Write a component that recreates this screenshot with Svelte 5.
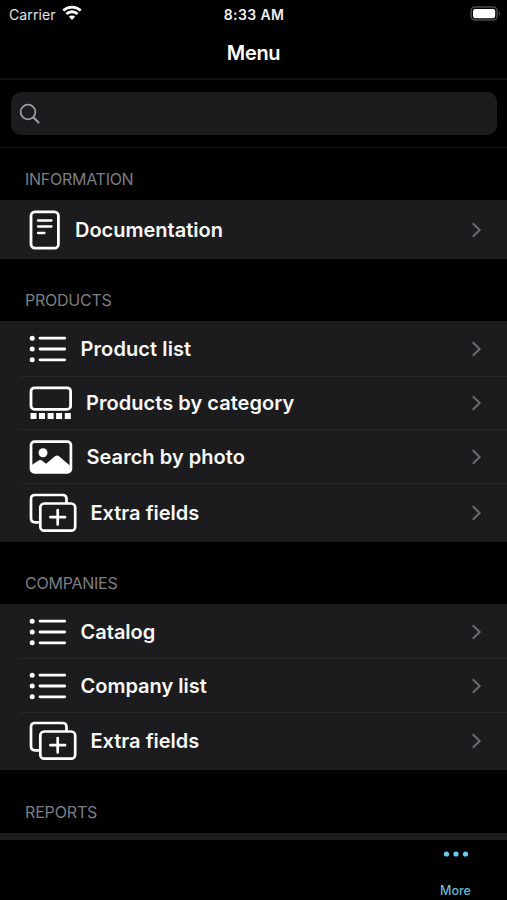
<script>
  const sections = [
    { title: 'INFORMATION', top: 52, ls: -0.27, rows: [{ icon: 'doc', label: 'Documentation', h: 59, w: 46, ls: 0 }] },
    {
      title: 'PRODUCTS', top: 62, ls: -0.25,
      rows: [
        { icon: 'list', label: 'Product list', h: 55, w: 51.5, ls: 0.1, pad: 1 },
        { icon: 'gallery', label: 'Products by category', h: 53, w: 57, ls: 0.04, pad: 1 },
        { icon: 'photo', label: 'Search by photo', h: 54, w: 57.5, ls: 0.04, pad: 2 },
        { icon: 'extra', label: 'Extra fields', h: 59, w: 61.5, ls: 0, pad: 0 }
      ]
    },
    {
      title: 'COMPANIES', top: 62, ls: -0.25,
      rows: [
        { icon: 'list', label: 'Catalog', h: 54, w: 51.5, ls: 0, pad: 2 },
        { icon: 'list', label: 'Company list', h: 54, w: 51.5, ls: 0, pad: 2 },
        { icon: 'extra', label: 'Extra fields', h: 58, w: 61.5, ls: 0, pad: 0 }
      ]
    },
    { title: 'REPORTS', top: 63, ls: -0.15, rows: [] }
  ];
</script>

<div class="screen">
  <div class="status">
    <div class="carrier">
      <span>Carrier</span>
      <svg width="20" height="16" viewBox="0 0 20 16" fill="none" stroke="#fff" stroke-width="2.8">
        <path d="M1.300 5.600C6.200.9 13.800.9 18.700 5.600" />
        <path d="M4.400 9C7.500 6 12.500 6 15.600 9" />
        <path d="M6.900 11.700C8.700 10 11.300 10 13.100 11.700L10 14.900Z" fill="#fff" stroke="none" />
      </svg>
    </div>
    <span class="time">8:33 AM</span>
    <svg class="battery" width="31" height="16" viewBox="0 0 31 16">
      <rect x="1.100" y="1.100" width="26" height="13" rx="4" fill="none" stroke="#4c4c4c" stroke-width="1.500" />
      <rect x="3" y="3" width="22.200" height="9.200" rx="2.200" fill="#fff" />
      <path d="M28.900 5.400Q31 7.600 28.900 9.800Z" fill="#555" />
    </svg>
  </div>
  <div class="title">Menu</div>
  <div class="searchwrap">
    <div class="search">
      <svg width="22" height="22" viewBox="0 0 22 22" fill="none" stroke="#98989e" stroke-width="1.800" stroke-linecap="round">
        <circle cx="9" cy="9" r="7.400" />
        <path d="M14.400 14.400L19.500 19.500" stroke-width="2.200" />
      </svg>
    </div>
  </div>

  <div class="list">
    {#each sections as s}
      <div class="header" style="height:{s.top}px;letter-spacing:{s.ls}px">{s.title}</div>
      {#each s.rows as r, i}
        <div class="row" class:first={i === 0} style="height:{r.h}px;padding-top:{r.pad ?? 0}px">
          <div class="icon" style="width:{r.w}px">
            {#if r.icon === 'doc'}
              <svg width="32" height="40" viewBox="0 0 32 40" fill="none" stroke="#fff" stroke-linecap="round">
                <rect x="2" y="1.800" width="27.400" height="36.400" rx="4" stroke-width="2.800" />
                <path d="M9 10.500H22.500M9 16.500H22.500M9 23H15.500" stroke-width="2.300" />
              </svg>
            {:else if r.icon === 'list'}
              <svg width="38" height="28" viewBox="0 0 38 28" fill="none" stroke="#fff" stroke-linecap="round">
                <path d="M11 3.200H35.700M11 14H35.700M11 24.800H35.700" stroke-width="2.800" />
                <g fill="#fff" stroke="none">
                  <circle cx="3.200" cy="3.200" r="2.500" /><circle cx="3.200" cy="14" r="2.500" /><circle cx="3.200" cy="24.800" r="2.500" />
                </g>
              </svg>
            {:else if r.icon === 'gallery'}
              <svg width="44" height="34" viewBox="0 0 44 34" fill="none">
                <rect x="2" y="1.800" width="39.600" height="21.600" rx="3.500" stroke="#fff" stroke-width="2.800" />
                <path d="M1.500 27h6v6h-6zM10 27h6v6h-6zM18.600 27h6v6h-6zM27.100 27h6v6h-6zM35.800 27h6v6h-6z" fill="#fff" />
              </svg>
            {:else if r.icon === 'photo'}
              <svg width="44" height="34" viewBox="0 0 44 34">
                <rect x="2" y="1.600" width="39.900" height="30.800" rx="3.500" fill="none" stroke="#fff" stroke-width="2.700" />
                <circle cx="14" cy="12.800" r="4.500" fill="#fff" />
                <path d="M2 25.500L10 20.300Q11.500 19.400 13 20.600L17 23.800L26 16.300Q28 14.800 30 16.300L42 26.500V29Q42 32.500 38.500 32.500H5.500Q2 32.500 2 29Z" fill="#fff" />
              </svg>
            {:else}
              <svg width="48" height="40" viewBox="0 0 48 40" fill="none" stroke="#fff" stroke-width="2.700" stroke-linecap="round">
                <path d="M9.500 29.300H6Q2 29.300 2 25.300V6Q2 2 6 2H33.500Q37.500 2 37.500 6V9.500" />
                <rect x="11.300" y="10.500" width="34.900" height="27.200" rx="4" />
                <path d="M28.700 17V31.400M21.400 24.200H36" />
              </svg>
            {/if}
          </div>
          <span class="label" style="letter-spacing:{r.ls}px">{r.label}</span>
          <svg class="chev" width="12" height="18" viewBox="0 0 12 18" fill="none" stroke="#69696d" stroke-width="2.100">
            <path d="M1.800 2.200L8.600 9L1.800 15.800" />
          </svg>
        </div>
      {/each}
    {/each}
    <div class="peek"></div>
  </div>

  <div class="tabs">
    <div class="tab">
      <svg width="26" height="6" viewBox="0 0 26 6" fill="#65cdef">
        <circle cx="3.500" cy="3" r="2.600" /><circle cx="13" cy="3" r="2.600" /><circle cx="22.500" cy="3" r="2.600" />
      </svg>
      <span>More</span>
    </div>
  </div>
</div>

<style>
  :global(body) { background: #000; }
  .screen {
    width: 507px; height: 900px; background: #000; color: #fff; overflow: hidden;
    display: flex; flex-direction: column; font-family: Inter, 'Liberation Sans', sans-serif;
  }
  svg { display: block; flex: none; }
  .status {
    height: 28px; flex: none; display: grid; grid-template-columns: 1fr auto 1fr;
    align-items: center; padding: 0 6px 0 9px; box-sizing: border-box; font-size: 14px;
  }
  .carrier { display: flex; align-items: center; gap: 6px; color: #e4e4e4; letter-spacing: 0.12px; }
  .carrier svg { margin-top: -2px; }
  .time { font-weight: 600; color: #eee; letter-spacing: 0.4px; margin-right: 2px; }
  .battery { justify-self: end; margin-top: -1px; }
  .title {
    height: 50px; flex: none; line-height: 50px; text-align: center; font-size: 20px; font-weight: 600;
    letter-spacing: -0.35px; border-bottom: 2px solid #111112;
  }
  .searchwrap { height: 68px; flex: none; box-sizing: border-box; padding: 12px 10px 0 11px; border-bottom: 1px solid #151516; }
  .search { height: 43px; border-radius: 10px; background: #1c1c1e; display: flex; align-items: center; padding-left: 8px; }
  .list { flex: none; height: 693px; overflow: hidden; }
  .header {
    box-sizing: border-box; padding: 0 0 11px 25px; display: flex; align-items: flex-end;
    font-size: 16px; line-height: 20px; color: #7e7e82;
  }
  .row {
    display: flex; align-items: center; box-sizing: border-box; background: #1c1c1e;
    padding: 0 24px 0 29px; position: relative;
  }
  .row:not(.first)::before {
    content: ''; position: absolute; left: 20px; right: 0; top: 0; height: 1px; background: #272729;
  }
  .label { font-size: 20px; font-weight: 600; white-space: nowrap; color: #f8f8f8; }
  .chev { margin-left: auto; }
  .peek { height: 7px; background: #1c1c1e; }
  .tabs { height: 59px; flex: none; display: flex; justify-content: flex-end; background: #000; }
  .tab { width: 103px; display: flex; flex-direction: column; align-items: center; padding-top: 10px; box-sizing: border-box; }
  .tab span { font-size: 12.5px; line-height: 16px; font-weight: 500; margin-top: 26px; color: #65b9d8; }
</style>
